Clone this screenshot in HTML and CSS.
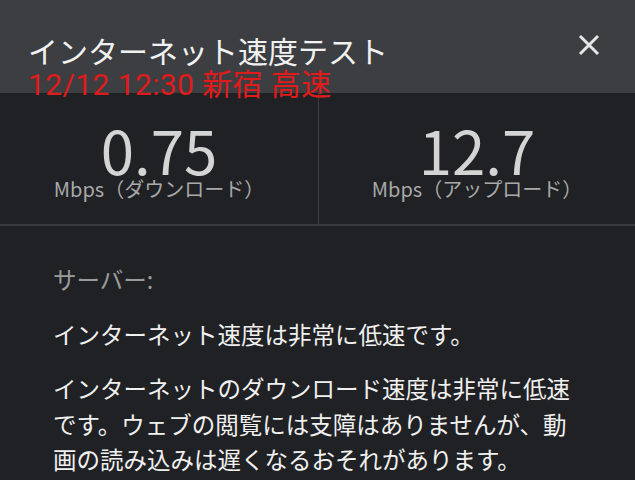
FILE: index.html
```html
<!DOCTYPE html>
<html lang="ja">
<head>
<meta charset="utf-8">
<link rel="stylesheet" href="styles.css">
</head>
<body>
<div class="screen">
  <header class="header">
    <h1 class="title">インターネット速度テスト</h1>
    <button class="close" aria-label="閉じる">
      <svg width="22" height="22" viewBox="0 0 22 22"><path d="M2 2L20 20M20 2L2 20" stroke="#e6e6e6" stroke-width="3" stroke-linecap="butt"/></svg>
    </button>
    <div class="stamp">12/12 12:30 新宿 高速</div>
  </header>
  <section class="stats">
    <div class="stat">
      <div class="value">0.75</div>
      <div class="unit">Mbps（ダウンロード）</div>
    </div>
    <div class="stat">
      <div class="value">12.7</div>
      <div class="unit">Mbps（アップロード）</div>
    </div>
  </section>
  <section class="content">
    <p class="server">サーバー:</p>
    <p class="text">インターネット速度は非常に低速です。</p>
    <p class="text">インターネットのダウンロード速度は非常に低速です。ウェブの閲覧には支障はありませんが、動画の読み込みは遅くなるおそれがあります。</p>
  </section>
</div>
</body>
</html>
```
FILE: styles.css
```css
html, body {
  margin: 0;
  padding: 0;
  background: #202124;
}
body {
  font-family: "Noto Sans CJK JP", "Noto Sans", sans-serif;
  width: 635px;
  height: 480px;
  overflow: hidden;
}
.header {
  position: relative;
  height: 93px;
  background: #3c3e41;
  display: flex;
  align-items: center;
  justify-content: space-between;
  padding: 0 35px 0 28px;
  box-sizing: border-box;
}
.title {
  margin: 6px 0 0 0;
  font-size: 30px;
  font-weight: 400;
  line-height: 1;
  color: #f1f1f1;
}
.close {
  background: none;
  border: 0;
  padding: 0;
  display: flex;
  margin-top: -4px;
}
.stamp {
  position: absolute;
  left: 28px;
  top: 70px;
  font-family: "Roboto", "Noto Sans CJK JP", sans-serif;
  font-size: 30px;
  line-height: 1;
  letter-spacing: 0.4px;
  color: #e01b1b;
  white-space: nowrap;
}
.stats {
  display: grid;
  grid-template-columns: 318px 1fr;
  height: 131px;
  border-bottom: 2px solid #393a3d;
}
.stat {
  display: flex;
  flex-direction: column;
  align-items: center;
  padding-top: 26px;
}
.stat + .stat {
  border-left: 1px solid #3d3e41;
}
.value {
  font-size: 60px;
  line-height: 1;
  color: #d4d4d4;
}
.unit {
  margin-top: 0;
  font-size: 20px;
  line-height: 1;
  color: #a9a9a9;
}
.content {
  padding: 36px 53px 0 53px;
  font-size: 23.5px;
  line-height: 35.5px;
}
.content p {
  margin: 0;
}
.server {
  color: #9b9b9b;
}
.text {
  color: #f0f0f0;
  margin-top: 19px !important;
}
```
